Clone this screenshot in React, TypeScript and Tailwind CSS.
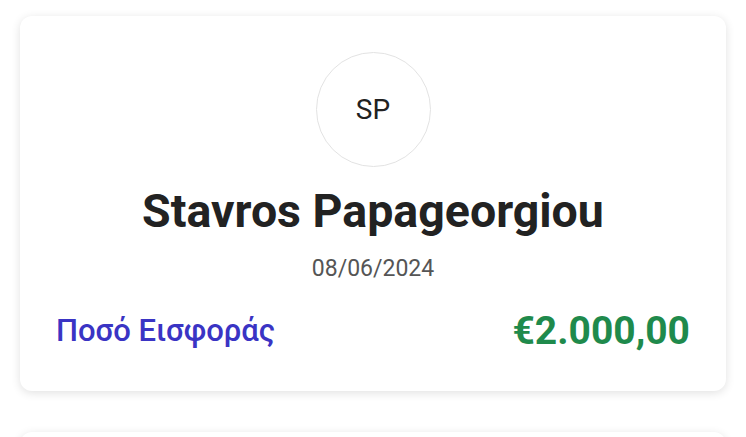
import React from "react";

export default function App() {
  const font = { fontFamily: "Roboto, 'Noto Sans', sans-serif" };
  return (
    <div className="w-[746px] h-[437px] overflow-hidden bg-white" style={font}>
      <div className="flex flex-col gap-[41px] px-[20px] pt-[16px]">
        <div className="rounded-[12px] bg-white shadow-[0_2px_10px_rgba(0,0,0,0.12)] h-[375px] flex flex-col items-center pt-[36px]">
          <div className="w-[115px] h-[115px] rounded-full border border-[#e3e3e3] flex items-center justify-center text-[28px] text-[#222]">
            SP
          </div>
          <div className="mt-[14px] text-[46.5px] leading-[60px] font-bold text-[#222]">
            Stavros Papageorgiou
          </div>
          <div className="mt-[14px] text-[23px] leading-[28px] text-[#555]">08/06/2024</div>
          <div className="mt-[25px] w-full flex items-center justify-between px-[36px] h-[46px]">
            <span className="text-[31px] font-medium text-[#3a34c4]">Ποσό Εισφοράς</span>
            <span className="text-[39px] font-bold text-[#1f8a4c]">€2.000,00</span>
          </div>
        </div>
        <div className="rounded-[12px] bg-white shadow-[0_2px_10px_rgba(0,0,0,0.12)] h-[200px]" />
      </div>
    </div>
  );
}
